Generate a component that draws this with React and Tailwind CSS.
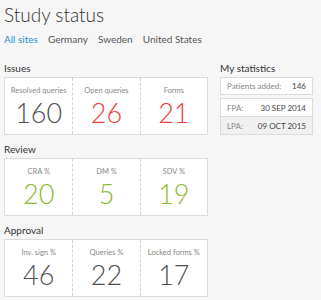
const sections = [
    {
        title: 'Issues',
        items: [
            { label: 'Resolved queries', value: 160, color: 'text-[#505050]' },
            { label: 'Open queries', value: 26, color: 'text-[#e8413c]' },
            { label: 'Forms', value: 21, color: 'text-[#e8413c]' },
        ],
    },
    {
        title: 'Review',
        items: [
            { label: 'CRA %', value: 20, color: 'text-[#8cb92f]' },
            { label: 'DM %', value: 5, color: 'text-[#8cb92f]' },
            { label: 'SDV %', value: 19, color: 'text-[#8cb92f]' },
        ],
    },
    {
        title: 'Approval',
        items: [
            { label: 'Inv. sign %', value: 46, color: 'text-[#505050]' },
            { label: 'Queries %', value: 22, color: 'text-[#505050]' },
            { label: 'Locked forms %', value: 17, color: 'text-[#505050]' },
        ],
    },
];

const tabs = ['All sites', 'Germany', 'Sweden', 'United States'];

const StatSection = ({ title, items }) => (
    <div>
        <h3 className="text-[10px] leading-[12px] text-[#333] mb-[3px]">{title}</h3>
        <div className="grid grid-cols-3 bg-white border border-[#dcdcdc] h-[58px]">
            {items.map((item, i) => (
                <div
                    key={item.label}
                    className={`flex flex-col items-center pt-[8px] ${i > 0 ? 'border-l border-dashed border-[#d4d4d4]' : ''}`}
                >
                    <span className="text-[7.5px] leading-[10px] text-[#888]">{item.label}</span>
                    <span className={`text-[27px] leading-[30px] font-light mt-[2px] ${item.color}`}>
                        {item.value}
                    </span>
                </div>
            ))}
        </div>
    </div>
);

export default function App() {
    return (
        <div
            className="w-[321px] h-[300px] overflow-hidden bg-[#f6f6f6] px-[4px] pt-[4px]"
            style={{ fontFamily: 'Lato, "Open Sans", sans-serif' }}
        >
            <h1 className="text-[19px] leading-[22px] font-light text-[#333]">Study status</h1>
            <div className="flex gap-[10px] mt-[7px] text-[10px] leading-[12px]">
                {tabs.map((t, i) => (
                    <span key={t} className={i === 0 ? 'text-[#2a8fd0]' : 'text-[#555]'}>
                        {t}
                    </span>
                ))}
            </div>
            <div className="flex gap-[12px] mt-[17px]">
                <div className="w-[204px] flex flex-col gap-[8px]">
                    {sections.map((s) => (
                        <StatSection key={s.title} {...s} />
                    ))}
                </div>
                <div className="flex-1 pr-[4px]">
                    <h3 className="text-[10px] leading-[12px] text-[#333] mb-[3px]">My statistics</h3>
                    <div className="flex justify-between items-center bg-white border border-[#dcdcdc] h-[18px] px-[6px] text-[8px]">
                        <span className="text-[#888]">Patients added:</span>
                        <span className="text-[#444]">146</span>
                    </div>
                    <div className="mt-[3px] border border-[#dcdcdc] text-[8px]">
                        <div className="flex justify-between items-center bg-white h-[18px] px-[6px] border-b border-[#dcdcdc]">
                            <span className="text-[#888]">FPA:</span>
                            <span className="text-[#444]">30 SEP 2014</span>
                        </div>
                        <div className="flex justify-between items-center bg-[#f0f0f0] h-[17px] px-[6px]">
                            <span className="text-[#888]">LPA:</span>
                            <span className="text-[#444]">09 OCT 2015</span>
                        </div>
                    </div>
                </div>
            </div>
        </div>
    );
}
